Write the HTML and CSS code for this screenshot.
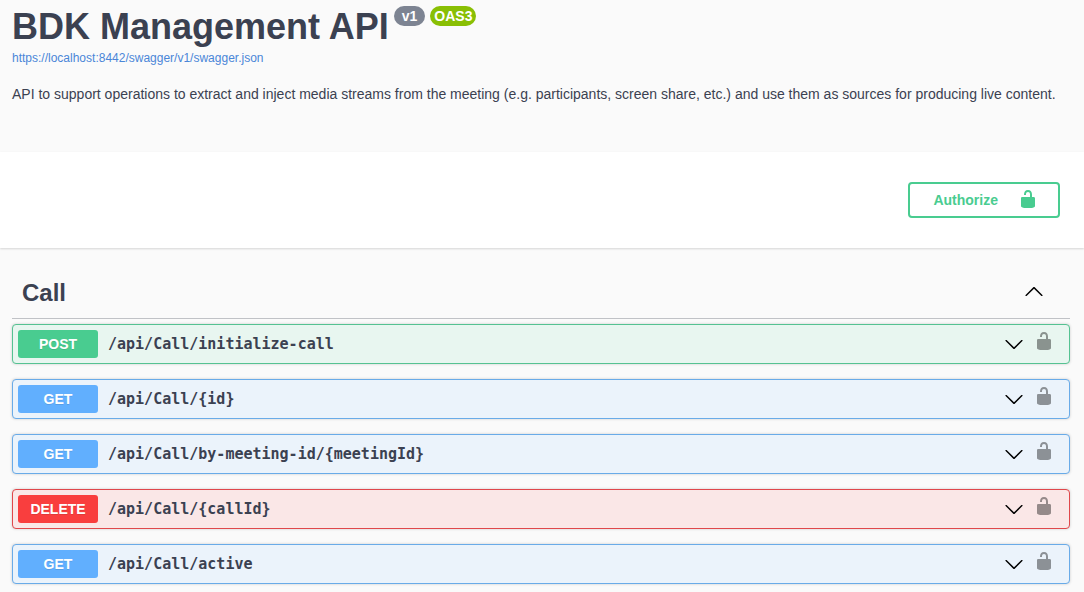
FILE: index.html
```html
<!DOCTYPE html>
<html lang="en">
<head>
<meta charset="utf-8">
<meta name="viewport" content="width=device-width, initial-scale=1">
<title>BDK Management API</title>
<link rel="stylesheet" href="styles.css">
</head>
<body>
<svg class="sprite" aria-hidden="true">
  <symbol id="unlocked" viewBox="0 0 20 20"><path d="M15.8 8H14V5.6C14 2.703 12.665 1 10 1 7.334 1 6 2.703 6 5.6V6h2v-.801C8 3.754 8.797 3 10 3c1.203 0 2 .754 2 2.199V8H4c-.553 0-1 .646-1 1.199V17c0 .549.428 1.139.951 1.307l1.197.387C5.672 18.861 6.55 19 7.1 19h5.8c.549 0 1.428-.139 1.951-.307l1.196-.387c.524-.167.953-.757.953-1.306V9.199C17 8.646 16.352 8 15.8 8z"/></symbol>
  <symbol id="arrow-up" viewBox="0 0 20 20"><path d="M17.418 14.908c.272.268.709.268.979 0s.271-.701 0-.969l-7.908-7.83c-.27-.268-.707-.268-.979 0l-7.908 7.83c-.27.268-.27.701 0 .969.271.268.709.268.979 0L10 7.767l7.418 7.141z"/></symbol>
  <symbol id="arrow-down" viewBox="0 0 20 20"><path d="M17.418 6.109c.272-.268.709-.268.979 0s.271.701 0 .969l-7.908 7.83c-.27.268-.707.268-.979 0l-7.908-7.83c-.27-.268-.27-.701 0-.969.271-.268.709-.268.979 0L10 13.25l7.418-7.141z"/></symbol>
</svg>

<header class="info">
  <div class="title-row">
    <h1 class="title">BDK Management API</h1>
    <span class="chip">v1</span>
    <span class="chip chip-oas">OAS3</span>
  </div>
  <a class="spec-link" href="https://localhost:8442/swagger/v1/swagger.json">https://localhost:8442/swagger/v1/swagger.json</a>
  <p class="description">API to support operations to extract and inject media streams from the meeting (e.g. participants, screen share, etc.) and use them as sources for producing live content.</p>
</header>

<section class="scheme">
  <button class="authorize" type="button">Authorize<svg class="icon"><use href="#unlocked"/></svg></button>
</section>

<main class="operations">
  <div class="tag">
    <h2 class="tag-name">Call</h2>
    <button class="icon-button collapse" type="button" aria-label="Collapse Call"><svg class="icon"><use href="#arrow-up"/></svg></button>
  </div>
  <div class="list">
    <div class="operation post">
      <span class="method">POST</span><span class="path">/api/Call/initialize-call</span>
      <button class="icon-button" type="button" aria-label="Expand operation"><svg class="icon"><use href="#arrow-down"/></svg></button>
      <button class="icon-button lock" type="button" aria-label="Authorization"><svg class="icon"><use href="#unlocked"/></svg></button>
    </div>
    <div class="operation get">
      <span class="method">GET</span><span class="path">/api/Call/{id}</span>
      <button class="icon-button" type="button" aria-label="Expand operation"><svg class="icon"><use href="#arrow-down"/></svg></button>
      <button class="icon-button lock" type="button" aria-label="Authorization"><svg class="icon"><use href="#unlocked"/></svg></button>
    </div>
    <div class="operation get">
      <span class="method">GET</span><span class="path">/api/Call/by-meeting-id/{meetingId}</span>
      <button class="icon-button" type="button" aria-label="Expand operation"><svg class="icon"><use href="#arrow-down"/></svg></button>
      <button class="icon-button lock" type="button" aria-label="Authorization"><svg class="icon"><use href="#unlocked"/></svg></button>
    </div>
    <div class="operation delete">
      <span class="method">DELETE</span><span class="path">/api/Call/{callId}</span>
      <button class="icon-button" type="button" aria-label="Expand operation"><svg class="icon"><use href="#arrow-down"/></svg></button>
      <button class="icon-button lock" type="button" aria-label="Authorization"><svg class="icon"><use href="#unlocked"/></svg></button>
    </div>
    <div class="operation get">
      <span class="method">GET</span><span class="path">/api/Call/active</span>
      <button class="icon-button" type="button" aria-label="Expand operation"><svg class="icon"><use href="#arrow-down"/></svg></button>
      <button class="icon-button lock" type="button" aria-label="Authorization"><svg class="icon"><use href="#unlocked"/></svg></button>
    </div>
  </div>
</main>
</body>
</html>
```

FILE: styles.css
```css
* {
  box-sizing: border-box;
}

body {
  margin: 0;
  background: #fafafa;
  color: #3b4151;
  font-family: "Liberation Sans", Arial, sans-serif;
  font-size: 14px;
}

h1,
h2,
p {
  margin: 0;
}

button {
  font: inherit;
  background: none;
  cursor: pointer;
}

.sprite {
  display: none;
}

.icon {
  display: block;
  width: 20px;
  height: 20px;
  fill: currentColor;
}

.info {
  padding: 6px 12px 50px;
}

.title-row {
  display: flex;
  align-items: flex-start;
  gap: 5px;
}

.title {
  font-size: 36px;
  line-height: 42px;
}

.chip {
  padding: 0 8px;
  border-radius: 10px;
  background: #7d8492;
  color: #fff;
  font-size: 14px;
  font-weight: bold;
  line-height: 20px;
}

.chip-oas {
  padding: 0 4px;
  background: #89bf04;
}

.spec-link {
  display: block;
  width: fit-content;
  margin-bottom: 18px;
  color: #4a86d8;
  font-size: 12px;
  line-height: 20px;
  text-decoration: none;
}

.description {
  line-height: 16px;
}

.scheme {
  display: flex;
  justify-content: flex-end;
  padding: 30px 24px;
  background: #fff;
  box-shadow: 0 1px 2px rgba(0, 0, 0, 0.15);
}

.authorize {
  display: flex;
  align-items: flex-start;
  gap: 20px;
  padding: 5px 20px 5px 23px;
  border: 2px solid #49cc90;
  border-radius: 4px;
  color: #49cc90;
  font-weight: bold;
  line-height: 22px;
}

.operations {
  padding: 20px 14px 8px 12px;
}

.tag {
  display: flex;
  align-items: center;
  justify-content: space-between;
  height: 51px;
  margin-bottom: 5px;
  padding: 0 26px 0 10px;
  border-bottom: 1px solid rgba(59, 65, 81, 0.3);
}

.tag-name {
  font-size: 24px;
  line-height: 28px;
}

.icon-button {
  padding: 0;
  border: 0;
  color: #000;
}

.collapse {
  padding-bottom: 4px;
}

.list {
  display: grid;
  gap: 15px;
}

.operation {
  display: flex;
  align-items: center;
  gap: 10px;
  padding: 5px 15px 5px 5px;
  border: 1px solid;
  border-radius: 4px;
  box-shadow: 0 0 3px rgba(0, 0, 0, 0.19);
}

.post {
  border-color: #55c292;
  background: #e8f6f0;
}

.get {
  border-color: #69abe8;
  background: #ebf3fb;
}

.delete {
  border-color: #e0474b;
  background: #fae7e7;
}

.method {
  width: 80px;
  border-radius: 3px;
  color: #fff;
  font-weight: bold;
  line-height: 28px;
  text-align: center;
  text-shadow: 0 1px 0 rgba(0, 0, 0, 0.1);
}

.post .method {
  background: #49cc90;
}

.get .method {
  background: #61affe;
}

.delete .method {
  background: #f93e3e;
}

.path {
  flex: 1;
  font-family: "DejaVu Sans Mono", monospace;
  font-size: 15px;
  font-weight: bold;
  line-height: 22px;
}

.lock {
  padding-bottom: 6px;
  opacity: 0.4;
}
```
